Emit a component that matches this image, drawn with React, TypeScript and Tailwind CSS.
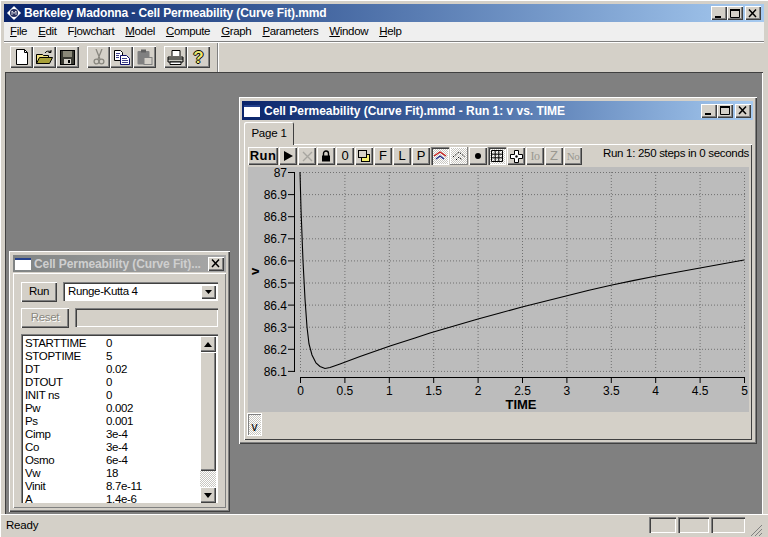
import React from "react";

const raised = "shadow-[inset_1px_1px_0_#ffffff,inset_-1px_-1px_0_#404040,inset_-2px_-2px_0_#808080]";
const sunken = "shadow-[inset_1px_1px_0_#808080,inset_2px_2px_0_#404040,inset_-1px_-1px_0_#ffffff]";
const dither = "bg-[repeating-conic-gradient(#ffffff_0_25%,#c8c6c0_0_50%)] bg-[length:2px_2px]";

function CapBtn({ kind, className = "" }: { kind: "min" | "max" | "close"; className?: string }) {
  return (
    <div className={`w-[16px] h-[14px] bg-[#d4d0c8] ${raised} flex items-center justify-center ${className}`}>
      <svg width="10" height="9" viewBox="0 0 10 9">
        {kind === "min" && <rect x="1" y="7" width="6" height="2" fill="#000" />}
        {kind === "max" && <path d="M0.5 1.5h9v7h-9z" fill="none" stroke="#000" strokeWidth="1" />}
        {kind === "max" && <rect x="0" y="0" width="10" height="2" fill="#000" />}
        {kind === "close" && <path d="M1 0.5l7 7.5M8 0.5l-7 7.5" stroke="#000" strokeWidth="1.5" fill="none" />}
      </svg>
    </div>
  );
}

function DocIcon() {
  return (
    <svg width="16" height="12" viewBox="0 0 16 12" className="shrink-0">
      <rect x="0" y="0" width="16" height="12" fill="#ffffff" />
      <rect x="0" y="0" width="16" height="2" fill="#24418c" />
    </svg>
  );
}

function ToolBtn({ children }: { children: React.ReactNode }) {
  return <div className={`w-[23px] h-[22px] bg-[#d4d0c8] ${raised} flex items-center justify-center`}>{children}</div>;
}

const curve =
  "M300 173L301 210L303 262L305 300L307 328L309 345L312 356L316 364L320 367.5L325 369.5L330 368.5L340 365L360 357.5L390 347L415 339L430 334L454 327L478 320L500 314L522 308L544 302.5L566 297L589 291.3L612 286L633 281.6L655 277.2L678 273L700 269L722 265L744 261";

const yLabels = ["87", "86.9", "86.8", "86.7", "86.6", "86.5", "86.4", "86.3", "86.2", "86.1"];
const xLabels = ["0", "0.5", "1", "1.5", "2", "2.5", "3", "3.5", "4", "4.5", "5"];

function Plot() {
  return (
    <div className="h-[245px] bg-[#bcbcbc]">
      <svg width="500" height="245" viewBox="248 168 500 245" style={{ fontFamily: "'Liberation Sans', sans-serif" }}>
        {yLabels.map((l, i) => {
          const y = 173.5 + i * 22.1;
          return (
            <g key={l}>
              <line x1="300" x2="745" y1={y} y2={y} stroke="#707070" strokeDasharray="1 2" />
              <line x1="288" x2="294" y1={y} y2={y} stroke="#000" />
              <text x="287" y={y + 4.5} textAnchor="end" fontSize="12" fill="#000">{l}</text>
            </g>
          );
        })}
        <line x1="294.5" x2="294.5" y1="173" y2="373" stroke="#000" />
        {xLabels.map((l, i) => {
          const x = 300.5 + i * 44.4;
          return (
            <g key={l}>
              <line x1={x} x2={x} y1="173" y2="372" stroke="#707070" strokeDasharray="1 2" />
              <line x1={x} x2={x} y1="378" y2="384" stroke="#000" />
              <text x={x} y="395.5" textAnchor="middle" fontSize="12" fill="#000">{l}</text>
            </g>
          );
        })}
        <line x1="300" x2="745" y1="378.5" y2="378.5" stroke="#000" />
        <path d={curve} fill="none" stroke="#000" strokeWidth="1.1" />
        <text x="521" y="410" textAnchor="middle" fontSize="13" fontWeight="700" fill="#000">TIME</text>
        <text x="0" y="0" transform="translate(258.5 272.5) rotate(-90)" textAnchor="middle" fontSize="13" fontWeight="700" fill="#000">v</text>
      </svg>
    </div>
  );
}

function GBtn({ children, checked, disabled }: { children: React.ReactNode; checked?: boolean; disabled?: boolean }) {
  return (
    <div
      className={`w-[18px] h-[18px] shrink-0 flex items-center justify-center text-[13px] ${disabled ? "text-[#9a9890]" : "text-black"} ${
        checked ? `${dither} ${sunken}` : `bg-[#d4d0c8] ${raised}`
      }`}
    >
      {children}
    </div>
  );
}

function GraphWindow() {
  return (
    <div className={`absolute left-[234px] top-[25px] w-[518px] h-[347px] bg-[#d4d0c8] ${raised} p-[3px] flex flex-col`}>
      <div className="h-[19px] mt-[1px] mr-[1px] pl-[2px] pr-[2px] flex items-center bg-gradient-to-r from-[#0a246a] to-[#a6caf0] text-white font-bold text-[12px] tracking-[-0.02px] shrink-0">
        <DocIcon />
        <span className="ml-[4px] whitespace-nowrap flex-1">Cell Permeability (Curve Fit).mmd - Run 1: v vs. TIME</span>
        <CapBtn kind="min" />
        <CapBtn kind="max" />
        <CapBtn kind="close" className="ml-[2px]" />
      </div>
      <div className="flex-1 flex flex-col pl-[2px] pr-[2px] pt-[2px] pb-[1px]">
        <div className="h-[22px] shrink-0 flex">
          <div className="w-[50px] h-[23px] bg-[#d4d0c8] shadow-[inset_1px_1px_0_#ffffff,inset_-1px_0_0_#404040] flex items-center justify-center text-[11.5px] tracking-[-0.2px] text-black rounded-t-[2px] relative z-10">
            Page 1
          </div>
        </div>
        <div className="flex-1 flex flex-col shadow-[inset_1px_1px_0_#ffffff,inset_-1px_-1px_0_#404040] pl-[4px] pr-[3px] pt-[3px]">
          <div className="h-[20px] shrink-0 flex items-start gap-[1px]">
            <div className={`w-[30px] h-[18px] bg-[#d4d0c8] ${raised} flex items-center justify-center font-bold text-[13px] tracking-[0.4px]`}>Run</div>
            <GBtn><svg width="11" height="10" viewBox="0 0 11 10"><path d="M1 0l9 5-9 5z" fill="#000" /></svg></GBtn>
            <GBtn disabled><svg width="11" height="11" viewBox="0 0 11 11"><path d="M1 1l9 9M10 1l-9 9" stroke="#a8a6a0" strokeWidth="1.4" /></svg></GBtn>
            <GBtn><svg width="12" height="12" viewBox="0 0 12 12"><path d="M3.5 6V3.5a2.5 2.5 0 0 1 5 0V6" fill="none" stroke="#000" strokeWidth="1.4" /><rect x="2" y="5.5" width="8" height="6" fill="#000" /></svg></GBtn>
            <GBtn>0</GBtn>
            <GBtn><svg width="12" height="12" viewBox="0 0 12 12"><rect x="3.5" y="4.5" width="8" height="7" fill="#f4ee70" stroke="#000" /><rect x="0.5" y="0.5" width="8" height="7" fill="#d4d0c8" stroke="#000" /></svg></GBtn>
            <GBtn>F</GBtn>
            <GBtn>L</GBtn>
            <GBtn>P</GBtn>
            <GBtn checked><svg width="14" height="12" viewBox="0 0 14 12"><path d="M1 6l6-4 6 4" fill="none" stroke="#c81818" strokeWidth="1.3" /><path d="M3 9l4-3 4 3" fill="none" stroke="#1c2a8c" strokeWidth="1.3" /></svg></GBtn>
            <div className={`w-[18px] h-[18px] shrink-0 flex items-center justify-center ${dither} shadow-[inset_-1px_-1px_0_#808080,inset_1px_1px_0_#ffffff]`}>
              <svg width="14" height="12" viewBox="0 0 14 12"><path d="M1 7l6-5 6 5" fill="none" stroke="#000" strokeDasharray="1.5 1.5" /><path d="M4 10l3-3 3 3" fill="none" stroke="#000" strokeDasharray="1.5 1.5" /></svg>
            </div>
            <GBtn><div className="w-[6px] h-[6px] rounded-full bg-black" /></GBtn>
            <GBtn checked><svg width="12" height="12" viewBox="0 0 12 12"><path d="M0.5 0.5h11v11h-11zM0.5 4.2h11M0.5 7.8h11M4.2 0.5v11M7.8 0.5v11" fill="none" stroke="#000" /></svg></GBtn>
            <GBtn><svg width="13" height="13" viewBox="0 0 13 13"><path d="M4.5 0.5h4v4h4v4h-4v4h-4v-4h-4v-4h4z" fill="#fff" stroke="#000" /><circle cx="6.5" cy="6.5" r="1.2" fill="#000" /></svg></GBtn>
            <GBtn disabled><span className="font-['Liberation_Serif',serif] text-[12px] tracking-[-0.5px]">Io</span></GBtn>
            <GBtn disabled><span className="text-[13px]">Z</span></GBtn>
            <GBtn disabled><span className="font-['Liberation_Serif',serif] text-[11px] tracking-[-0.5px]">No</span></GBtn>
            <div className="flex-1 text-right text-[11.5px] text-black whitespace-nowrap -mt-[2px] tracking-[-0.3px]">Run 1: 250 steps in 0 seconds</div>
          </div>
          <Plot />
          <div className="flex-1 pt-[2px]">
            <div className={`w-[13px] h-[21px] ${dither} shadow-[inset_1px_1px_0_#808080,0_0_0_1px_#ffffff] flex items-end justify-center text-[12px] leading-[16px]`}>v</div>
          </div>
        </div>
      </div>
    </div>
  );
}

const params: [string, string][] = [
  ["STARTTIME", "0"],
  ["STOPTIME", "5"],
  ["DT", "0.02"],
  ["DTOUT", "0"],
  ["INIT ns", "0"],
  ["Pw", "0.002"],
  ["Ps", "0.001"],
  ["Cimp", "3e-4"],
  ["Co", "3e-4"],
  ["Osmo", "6e-4"],
  ["Vw", "18"],
  ["Vinit", "8.7e-11"],
  ["A", "1.4e-6"],
];

function ScrollBtn({ up }: { up?: boolean }) {
  return (
    <div className={`w-[16px] h-[16px] shrink-0 bg-[#d4d0c8] ${raised} flex items-center justify-center`}>
      <svg width="8" height="5" viewBox="0 0 8 5">
        <path d={up ? "M4 0L8 5H0z" : "M0 0H8L4 5z"} fill="#000" />
      </svg>
    </div>
  );
}

function ParamWindow() {
  return (
    <div className={`absolute left-[4px] top-[179px] w-[221px] h-[261px] bg-[#d4d0c8] ${raised} p-[3px] flex flex-col`}>
      <div className="h-[17px] mt-[1px] mx-[1px] pl-[2px] pr-[2px] flex items-center bg-gradient-to-r from-[#808484] to-[#a8a8a8] text-[#cfcfcf] font-bold text-[12px] tracking-[-0.1px] shrink-0">
        <DocIcon />
        <span className="ml-[3px] whitespace-nowrap flex-1">Cell Permeability (Curve Fit)...</span>
        <CapBtn kind="close" />
      </div>
      <div className="flex-1 min-h-0 mt-[1px] mx-[1px] mb-[1px] shadow-[inset_1px_1px_0_#ffffff,inset_-1px_-1px_0_#808080] pl-[8px] pr-[5px] pt-[9px] pb-[5px] flex flex-col text-[11.5px] tracking-[-0.35px]">
        <div className="flex gap-[6px] h-[20px] shrink-0">
          <div className={`w-[36px] h-[20px] bg-[#d4d0c8] ${raised} flex items-center justify-center`}>Run</div>
          <div className={`w-[155px] h-[19px] bg-white ${sunken} flex items-center pl-[5px] pr-[2px]`}>
            <span className="flex-1">Runge-Kutta 4</span>
            <div className={`w-[15px] h-[14px] bg-[#d4d0c8] ${raised} flex items-center justify-center`}>
              <svg width="7" height="4" viewBox="0 0 7 4"><path d="M0 0H7L3.5 4z" fill="#000" /></svg>
            </div>
          </div>
        </div>
        <div className="flex gap-[6px] h-[20px] mt-[6px] shrink-0">
          <div className={`w-[48px] h-[20px] bg-[#d4d0c8] ${raised} flex items-center justify-center text-[#8a8880] [text-shadow:1px_1px_0_#ffffff]`}>Reset</div>
          <div className={`w-[143px] h-[19px] bg-[#d4d0c8] ${sunken}`} />
        </div>
        <div className={`mt-[6px] w-[197px] flex-1 min-h-0 bg-white ${sunken} flex pt-[2px] pl-[2px] pr-[2px] overflow-hidden`}>
          <div className="flex-1 pl-[2px] pt-[1px] overflow-hidden leading-[13px] text-black">
            {params.map(([k, v]) => (
              <div key={k} className="flex h-[13px]">
                <span className="w-[81px]">{k}</span>
                <span>{v}</span>
              </div>
            ))}
          </div>
          <div className="w-[16px] flex flex-col shrink-0">
            <ScrollBtn up />
            <div className={`h-[119px] bg-[#d4d0c8] ${raised}`} />
            <div className={`flex-1 min-h-0 ${dither}`} />
            <ScrollBtn />
          </div>
        </div>
      </div>
    </div>
  );
}

export default function App() {
  return (
    <div className="w-[768px] h-[537px] bg-[#d4d0c8] flex flex-col overflow-hidden text-black font-['Liberation_Sans',Arial,sans-serif] shadow-[inset_1px_1px_0_#ffffff]">
      <div className="h-[18px] mt-[4px] mx-[4px] shrink-0 pl-[3px] pr-[3px] flex items-center bg-gradient-to-r from-[#0a246a] to-[#a6caf0] text-white font-bold text-[12px] tracking-[-0.12px]">
        <svg width="14" height="14" viewBox="0 0 14 14" className="shrink-0">
          <path d="M7 0l7 7-7 7-7-7z" fill="#ffffff" />
          <circle cx="7" cy="7" r="4" fill="#27305e" />
          <path d="M5 9V5l2 2.5L9 5v4" fill="none" stroke="#fff" strokeWidth="0.8" />
        </svg>
        <span className="ml-[3px] flex-1 whitespace-nowrap">Berkeley Madonna - Cell Permeability (Curve Fit).mmd</span>
        <CapBtn kind="min" />
        <CapBtn kind="max" />
        <CapBtn kind="close" className="ml-[2px]" />
      </div>
      <div className="h-[19px] mx-[4px] shrink-0 bg-[#efefef] flex items-center text-[11.5px] tracking-[-0.35px] pl-[6px] gap-[11px] border-b border-b-[#808080] box-content">
        {[
          ["F", "ile"],
          ["E", "dit"],
          ["Fl", "owchart"],
          ["M", "odel"],
          ["C", "ompute"],
          ["G", "raph"],
          ["P", "arameters"],
          ["W", "indow"],
          ["H", "elp"],
        ].map(([a, b]) => (
          <span key={a} className="whitespace-nowrap">
            {a === "Fl" ? <>F<span className="underline">l</span>owchart</> : <><span className="underline">{a}</span>{b}</>}
          </span>
        ))}
      </div>
      <div className="h-[30px] mx-[4px] shrink-0 flex items-center shadow-[inset_0_1px_0_#ffffff] pl-[6px]">
        <div className="flex">
          <ToolBtn><svg width="14" height="16" viewBox="0 0 14 16"><path d="M1.5 0.5h8l3 3v12h-11z" fill="#fff" stroke="#000" /><path d="M9.5 0.5v3h3" fill="none" stroke="#000" /></svg></ToolBtn>
          <ToolBtn><svg width="17" height="15" viewBox="0 0 17 15"><path d="M0.5 13.5v-9h6l1 1h5v8z" fill="#f0e080" stroke="#000" /><path d="M0.5 13.5l3-6h13l-3 6z" fill="#a8a038" stroke="#000" /><path d="M9 3c1-2 4-2.5 6-1M15 0v2.5h-2.5" fill="none" stroke="#000" /></svg></ToolBtn>
          <ToolBtn><svg width="15" height="15" viewBox="0 0 15 15"><rect x="0.5" y="0.5" width="14" height="14" fill="#3a3a32" stroke="#000" /><rect x="3" y="1" width="9" height="6" fill="#8a8878" /><rect x="4" y="9" width="7" height="5" fill="#d4d0c8" /><rect x="8" y="10" width="2" height="3" fill="#000" /></svg></ToolBtn>
        </div>
        <div className="flex ml-[8px]">
          <ToolBtn><svg width="12" height="16" viewBox="0 0 12 16"><path d="M3 0l4 10M9 0l-4 10" stroke="#8a8880" strokeWidth="1.3" fill="none" /><circle cx="3.5" cy="12.5" r="2.4" fill="none" stroke="#8a8880" strokeWidth="1.3" /><circle cx="8.5" cy="12.5" r="2.4" fill="none" stroke="#8a8880" strokeWidth="1.3" /></svg></ToolBtn>
          <ToolBtn><svg width="16" height="15" viewBox="0 0 16 15"><path d="M0.5 0.5h6l2 2v8h-8z" fill="#fff" stroke="#000" /><path d="M6.5 5.5h6l3 3v6h-9z" fill="#fff" stroke="#10106a" /><path d="M2 3.5h4M2 5.5h3M2 7.5h3M8 8.5h5M8 10.5h6M8 12.5h6" stroke="#10106a" strokeWidth="0.8" /></svg></ToolBtn>
          <ToolBtn><svg width="16" height="16" viewBox="0 0 16 16"><rect x="0.5" y="2" width="12" height="13.5" rx="1" fill="#808080" /><rect x="4" y="0.5" width="5" height="3" fill="#606060" /><rect x="7" y="8.5" width="8" height="7" fill="#d4d0c8" stroke="#808080" /></svg></ToolBtn>
        </div>
        <div className="flex ml-[8px]">
          <ToolBtn><svg width="17" height="15" viewBox="0 0 17 15"><path d="M5 6V0.5h8V6" fill="#fff" stroke="#000" /><path d="M1 7h15v5H1z" fill="#c8c8c0" stroke="#000" /><path d="M3 12h11v2.5H3z" fill="#fff" stroke="#000" /><path d="M1 9h15" stroke="#000" /></svg></ToolBtn>
          <ToolBtn><span className="font-bold text-[17px] leading-none text-[#ece872] [text-shadow:1px_0_0_#000,-1px_0_0_#000,0_1px_0_#000,0_-1px_0_#000]">?</span></ToolBtn>
        </div>
        <div className="ml-[7px] w-[2px] h-[29px] bg-[#808080] border-r border-r-white" />
      </div>
      <div className="flex-1 ml-[5px] mr-[5px] relative bg-[#808080] shadow-[inset_1px_1px_0_#404040,inset_-1px_0_0_#ffffff]">
        <GraphWindow />
        <ParamWindow />
      </div>
      <div className="h-[23px] shrink-0 shadow-[inset_0_1px_0_#ffffff] flex items-center pl-[6px] pr-[6px] text-[11.5px] tracking-[-0.2px]">
        <span className="flex-1">Ready</span>
        <div className={`w-[27px] h-[16px] ${sunken} mr-[2px] mb-[2px]`} />
        <div className={`w-[31px] h-[16px] ${sunken} mr-[2px] mb-[2px]`} />
        <div className={`w-[34px] h-[16px] ${sunken} mr-[5px] mb-[2px]`} />
        <svg width="12" height="12" viewBox="0 0 12 12" className="shrink-0 self-end mb-[1px]">
          <path d="M1 12L12 1M5 12L12 5M9 12L12 9" stroke="#808080" strokeWidth="1" />
        </svg>
      </div>
    </div>
  );
}
